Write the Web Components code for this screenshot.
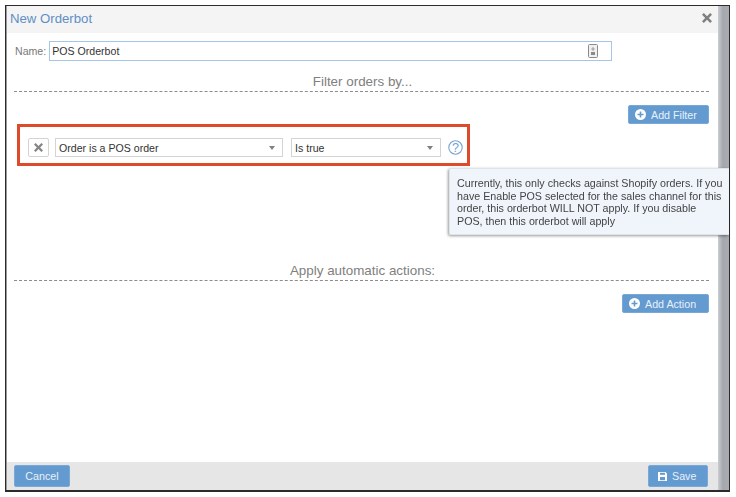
<!DOCTYPE html>
<html>
<head>
<meta charset="utf-8">
<title>New Orderbot</title>
<style>
  html, body { margin: 0; padding: 0; background: #fff; }
  body { font-family: "Liberation Sans", Arial, sans-serif; }
</style>
</head>
<body>

<ob-dialog heading="New Orderbot">
  <ob-name-row label="Name:" value="POS Orderbot"></ob-name-row>
  <ob-section heading="Filter orders by..." style="--title-top:14px;--title-shift:1px">
    <ob-button icon="plus" style="width:81px">Add Filter</ob-button>
  </ob-section>
  <ob-filter-row></ob-filter-row>
  <ob-tooltip>Currently, this only checks against Shopify orders. If you<br>have Enable POS selected for the sales channel for this<br>order, this orderbot WILL NOT apply. If you disable<br>POS, then this orderbot will apply</ob-tooltip>
  <ob-section heading="Apply automatic actions:" style="--title-top:98px;--title-shift:1px">
    <ob-button icon="plus" style="width:87px">Add Action</ob-button>
  </ob-section>
  <ob-button slot="cancel" tall style="width:56px">Cancel</ob-button>
  <ob-button slot="save" tall icon="save" style="width:60px;padding-left:9px">Save</ob-button>
</ob-dialog>

<script>
// heavy "x" used by the dialog close and the row delete button
const X_PATH = "M1.8 0 L5 3.2 L8.2 0 L10 1.8 L6.8 5 L10 8.2 L8.2 10 L5 6.8 L1.8 10 L0 8.2 L3.2 5 L0 1.8 Z";

class ObDialog extends HTMLElement {
  constructor() {
    super();
    this.attachShadow({ mode: "open" });
    this.shadowRoot.innerHTML = `
      <style>
        :host {
          display: flex;
          box-sizing: border-box;
          width: 725px;
          height: 487px;
          margin: 5px 0 0 5px;
          border: 1px solid #2b2b2b;
          border-bottom-width: 2px;
          background: #fff;
          position: relative;
          filter: blur(0.4px);
        }
        .main {
          flex: 1;
          min-width: 0;
          display: flex;
          flex-direction: column;
          border-left: 1px solid #9a9a9a;
        }
        .strip {
          width: 11px;
          background: linear-gradient(to right, #c9ccd0, #a4a8ae 45%, #a9adb2);
        }
        header {
          height: 27px;
          box-sizing: border-box;
          flex: none;
          background: #f4f4f4;
          display: flex;
          align-items: center;
          justify-content: space-between;
          padding: 0 6px 3px 3px;
          font-size: 13.2px;
          color: #5e8fc7;
        }
        .body { flex: 1; min-height: 0; position: relative; }
        footer {
          height: 28px;
          flex: none;
          background: #e6e6e6;
          display: flex;
          align-items: center;
          justify-content: space-between;
          padding: 0 10px 0 7px;
        }
      </style>
      <div class="main">
        <header>
          <span id="title"></span>
          <svg width="10" height="10" viewBox="0 0 10 10"><path d="${X_PATH}" fill="#808080"/></svg>
        </header>
        <div class="body"><slot></slot></div>
        <footer><slot name="cancel"></slot><slot name="save"></slot></footer>
      </div>
      <div class="strip"></div>
    `;
    this.shadowRoot.getElementById("title").textContent = this.getAttribute("heading");
  }
}

class ObNameRow extends HTMLElement {
  constructor() {
    super();
    this.attachShadow({ mode: "open" });
    this.shadowRoot.innerHTML = `
      <style>
        :host {
          display: flex;
          align-items: center;
          gap: 3px;
          padding: 8px 0 0 8px;
          width: 597px;
          font-size: 10.6px;
          color: #777;
        }
        .input {
          flex: 1;
          box-sizing: border-box;
          height: 20px;
          border: 1px solid #a6c6e6;
          display: flex;
          align-items: center;
          justify-content: space-between;
          padding: 0 13px 0 2px;
          color: #333;
        }
        svg { display: block; }
      </style>
      <span id="label"></span>
      <div class="input">
        <span id="value"></span>
        <svg width="10" height="14" viewBox="0 0 10 14">
          <rect x="0.5" y="0.5" width="9" height="13" rx="1" fill="#f0f0f0" stroke="#8a8a8a"/>
          <path d="M5 3 L5 7 M3.2 5 L6.8 5" stroke="#8a8a8a" fill="none" stroke-width="0.8"/>
          <rect x="3" y="8" width="4" height="3" fill="#8a8a8a"/>
        </svg>
      </div>
    `;
    this.shadowRoot.getElementById("label").textContent = this.getAttribute("label");
    this.shadowRoot.getElementById("value").textContent = this.getAttribute("value");
  }
}

class ObSection extends HTMLElement {
  constructor() {
    super();
    this.attachShadow({ mode: "open" });
    this.shadowRoot.innerHTML = `
      <style>
        :host {
          display: block;
          padding: var(--title-top) 9px 0 7px;
        }
        h3 {
          margin: 0;
          font-weight: normal;
          font-size: 13.4px;
          line-height: 14px;
          color: #808080;
          text-align: center;
          padding-bottom: 2px;
          border-bottom: 1px dashed #8c8c8c;
        }
        h3 span { position: relative; left: var(--title-shift); }
        .tools { display: flex; justify-content: flex-end; padding-top: 13px; }
      </style>
      <h3><span id="t"></span></h3>
      <div class="tools"><slot></slot></div>
    `;
    this.shadowRoot.getElementById("t").textContent = this.getAttribute("heading");
  }
}

class ObButton extends HTMLElement {
  constructor() {
    super();
    this.attachShadow({ mode: "open" });
    const icon = this.getAttribute("icon");
    let glyph = "";
    if (icon === "plus") {
      glyph = `<svg width="11" height="11" viewBox="0 0 11 11"><circle cx="5.5" cy="5.5" r="5.5" fill="#fff"/><path d="M5.5 2.5 V8.5 M2.5 5.5 H8.5" stroke="#639ad0" stroke-width="1.6"/></svg>`;
    } else if (icon === "save") {
      glyph = `<svg width="9" height="9" viewBox="0 0 9 9"><path d="M0 0 H7.5 L9 1.5 V9 H0 Z" fill="#fff"/><rect x="2" y="0.8" width="5" height="2" fill="#639ad0"/><rect x="2" y="5" width="5" height="3.2" fill="#639ad0"/></svg>`;
    }
    this.shadowRoot.innerHTML = `
      <style>
        :host {
          display: inline-flex;
          box-sizing: border-box;
          align-items: center;
          justify-content: center;
          gap: 5px;
          height: 19px;
          background: #639ad0;
          border: 1px solid #7aa8d6;
          border-radius: 2px;
          color: #e9f1f9;
          font-size: 10.7px;
        }
        :host([icon]) { justify-content: flex-start; padding-left: 6px; }
        :host([tall]) { height: 22px; }
        svg { display: block; flex: none; }
      </style>
      ${glyph}<slot></slot>
    `;
  }
}

class ObSelect extends HTMLElement {
  constructor() {
    super();
    this.attachShadow({ mode: "open" });
    this.shadowRoot.innerHTML = `
      <style>
        :host {
          display: flex;
          box-sizing: border-box;
          align-items: center;
          justify-content: space-between;
          height: 19px;
          border: 1px solid #d4d4d4;
          padding: 0 7px 0 3px;
          background: #fff;
          font-size: 10.6px;
          color: #333;
        }
        i { width: 0; height: 0; border: 3px solid transparent; border-top: 4px solid #808080; border-bottom: 0; }
      </style>
      <slot></slot><i></i>
    `;
  }
}

class ObFilterRow extends HTMLElement {
  constructor() {
    super();
    this.attachShadow({ mode: "open" });
    this.shadowRoot.innerHTML = `
      <style>
        :host {
          display: flex;
          box-sizing: border-box;
          align-items: center;
          width: 453px;
          height: 42px;
          margin: 0 0 0 10px;
          border: 3px solid #dd4a2c;
          padding: 5px 0 0 8px;
        }
        .del {
          box-sizing: border-box;
          width: 21px;
          height: 19px;
          border: 1px solid #d4d4d4;
          border-radius: 2px;
          display: flex;
          align-items: center;
          justify-content: center;
          margin-right: 6px;
        }
        .help { margin-left: 7px; display: block; }
        svg text { font: 12.5px "Liberation Sans", Arial, sans-serif; fill: #6f9fd2; }
      </style>
      <div class="del"><svg width="9" height="9" viewBox="0 0 10 10"><path d="${X_PATH}" fill="#858585"/></svg></div>
      <ob-select style="width:228px">Order is a POS order</ob-select>
      <ob-select style="width:150px;margin-left:8px">Is true</ob-select>
      <svg class="help" width="15" height="15" viewBox="0 0 15 15">
        <circle cx="7.5" cy="7.5" r="6.7" fill="none" stroke="#79a5d4" stroke-width="1.1"/>
        <text x="7.5" y="12" text-anchor="middle">?</text>
      </svg>
    `;
  }
}

class ObTooltip extends HTMLElement {
  constructor() {
    super();
    this.attachShadow({ mode: "open" });
    this.shadowRoot.innerHTML = `
      <style>
        :host {
          position: absolute;
          left: 442px;
          top: 135px;
          right: -11px;
          box-sizing: border-box;
          height: 67px;
          padding: 8px 4px 0 7px;
          background: #eff5fb;
          border: 1px solid #dfe4e8;
          border-right: 0;
          border-radius: 2px 0 0 2px;
          box-shadow: -1px 1px 3px rgba(0,0,0,.4);
          font-size: 10.7px;
          line-height: 12.6px;
          color: #444;
          white-space: nowrap;
        }
      </style>
      <slot></slot>
    `;
  }
}

customElements.define("ob-dialog", ObDialog);
customElements.define("ob-name-row", ObNameRow);
customElements.define("ob-section", ObSection);
customElements.define("ob-button", ObButton);
customElements.define("ob-select", ObSelect);
customElements.define("ob-filter-row", ObFilterRow);
customElements.define("ob-tooltip", ObTooltip);
</script>
</body>
</html>
